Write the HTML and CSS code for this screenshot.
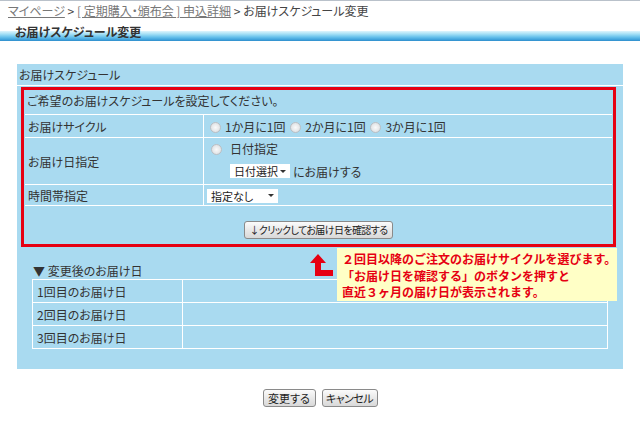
FILE: index.html
```html
<!DOCTYPE html>
<html lang="ja">
<head>
<meta charset="utf-8">
<link rel="stylesheet" href="styles.css">
</head>
<body>
<div class="crumbs"><a href="#">マイページ</a> &gt; <a href="#">[ 定期購入・頒布会 ] 申込詳細</a> &gt; お届けスケジュール変更</div>
<div class="pagehead">お届けスケジュール変更</div>

<div class="panel">
  <div class="panel-title">お届けスケジュール</div>
  <div class="redbox">
    <div class="intro">ご希望のお届けスケジュールを設定してください。</div>
    <table class="form">
      <tr class="r-cycle">
        <th>お届けサイクル</th>
        <td><span class="radio"></span>1か月に1回 <span class="radio"></span>2か月に1回 <span class="radio"></span>3か月に1回</td>
      </tr>
      <tr class="r-date">
        <th>お届け日指定</th>
        <td>
          <div class="line1"><span class="radio"></span>日付指定</div>
          <div class="line2"><span class="sel sel-date">日付選択<i class="caret"></i></span>にお届けする</div>
        </td>
      </tr>
      <tr class="r-time">
        <th>時間帯指定</th>
        <td><span class="sel sel-time">指定なし<i class="caret"></i></span></td>
      </tr>
    </table>
    <div class="checkrow"><button class="btn btn-check">↓クリックしてお届け日を確認する</button></div>
  </div>

  <div class="after-head">▼ 変更後のお届け日</div>
  <table class="dates">
    <tr><th>1回目のお届け日</th><td></td></tr>
    <tr><th>2回目のお届け日</th><td></td></tr>
    <tr><th>3回目のお届け日</th><td></td></tr>
  </table>

  <svg class="arrow" width="24" height="24" viewBox="0 0 24 24"><polygon points="8,0 0,9 5,9 5,22 23,22 23,16 11,16 11,9 16,9" fill="#e60012"/></svg>
  <div class="callout">２回目以降のご注文のお届けサイクルを選びます。<br>「お届け日を確認する」のボタンを押すと<br>直近３ヶ月の届け日が表示されます。</div>
</div>

<div class="actions">
  <button class="btn btn-ok">変更する</button>
  <button class="btn btn-cancel">キャンセル</button>
</div>
</body>
</html>
```

FILE: styles.css
```css
html, body {
  margin: 0;
  padding: 0;
  background: #fff;
}
body {
  border-top: 1px solid #b9c1ca;
  font-family: "Noto Sans CJK JP", "DejaVu Sans", sans-serif;
  font-size: 12px;
  color: #333;
  font-feature-settings: "palt";
}
.crumbs {
  height: 20px;
  line-height: 20px;
  padding-left: 8px;
  color: #444;
}
.crumbs a {
  color: #777;
  text-decoration: underline;
}
.pagehead {
  height: 20px;
  line-height: 22px;
  padding-left: 15px;
  font-weight: bold;
  color: #333;
  background:
    linear-gradient(to bottom, #fff 0, #fff 10px, #dff5fd 10px, #a6e0f6 13px, #69c2ec 16px, #3c9ed9 19px, #2f8cc9 20px);
}
.panel {
  position: relative;
  margin: 23px 0 0 17px;
  width: 606px;
  background: #a9daf0;
  padding-bottom: 20px;
}
.panel-title {
  height: 21px;
  line-height: 21px;
  padding-left: 2px;
  border-bottom: 1px solid #fff;
}
.redbox {
  margin: 1px 7px 0 4px;
  border: 3px solid #e60012;
}
.intro {
  height: 24px;
  line-height: 22px;
  padding-left: 3px;
}
.form {
  width: calc(100% - 2px);
  margin: 0 1px;
  border-collapse: collapse;
  border-top: 1px solid #fff;
}
.form th, .form td {
  border-bottom: 1px solid #fff;
  padding: 0;
  vertical-align: middle;
}
.form th {
  width: 175px;
  text-align: left;
  font-weight: normal;
  padding-left: 3px;
  border-right: 1px solid #fff;
}
.form td {
  padding-left: 6px;
}
.r-cycle th, .r-cycle td { height: 22px; }
.r-date th, .r-date td { height: 46px; }
.r-time th, .r-time td { height: 20px; }
.r-time td { padding-left: 3px; }
.line1 {
  height: 20px;
  line-height: 20px;
  padding-left: 1px;
}
.line1 .radio { margin-right: 8px; }
.line2 {
  height: 24px;
  display: flex;
  align-items: center;
  padding-left: 20px;
}
.radio {
  display: inline-block;
  width: 9px;
  height: 9px;
  border-radius: 50%;
  border: 1px solid #b9bec3;
  background: radial-gradient(circle at 50% 50%, #fafafa 0, #e2e4e6 70%);
  vertical-align: -1px;
  margin: 0 4px 0 0;
}
.r-cycle .radio { margin-left: 2px; }
.r-cycle .radio:first-child { margin-left: 0; }
.sel {
  display: inline-flex;
  align-items: center;
  justify-content: space-between;
  height: 14px;
  background: #fff;
  padding: 0 4px;
  box-sizing: border-box;
  font-size: 11px;
  line-height: 14px;
  color: #222;
}
.sel-date { width: 60px; margin-right: 3px; }
.sel-time { width: 71px; }
.caret {
  display: inline-block;
  width: 0;
  height: 0;
  border-left: 3px solid transparent;
  border-right: 3px solid transparent;
  border-top: 3px solid #333;
}
.checkrow {
  height: 38px;
  display: flex;
  justify-content: center;
  align-items: flex-start;
  padding-top: 15px;
  box-sizing: border-box;
}
.btn {
  font-family: inherit;
  font-size: 11px;
  color: #222;
  height: 18px;
  padding: 0 5px;
  line-height: 16px;
  border: 1px solid #8a8a8a;
  border-radius: 3px;
  background: linear-gradient(#fbfbfb, #e9e9e9 50%, #d9d9d9);
  font-feature-settings: "palt";
}
.btn-check {
  width: 149px;
  padding: 0;
  font-size: 10px;
  letter-spacing: -0.6px;
}
.after-head {
  margin: 15px 0 0 15px;
  height: 17px;
  line-height: 17px;
  padding-left: 1px;
}
.dates {
  margin-left: 15px;
  width: 576px;
  border-collapse: collapse;
}
.dates th, .dates td {
  border: 1px solid #fff;
  height: 22px;
  padding: 0;
}
.dates th {
  width: 145px;
  text-align: left;
  font-weight: normal;
  padding-left: 4px;
}
.arrow {
  position: absolute;
  left: 293px;
  top: 190px;
}
.callout {
  position: absolute;
  left: 320px;
  top: 184px;
  width: 280px;
  height: 53px;
  box-sizing: border-box;
  padding: 3px 0 0 5px;
  background: #ffffc6;
  color: #e60012;
  font-weight: bold;
  font-size: 12px;
  line-height: 16.5px;
  font-feature-settings: normal;
}
.actions {
  display: flex;
  justify-content: center;
  gap: 6px;
  margin-top: 20px;
}
.btn-ok { width: 53px; padding: 0; }
.btn-cancel { width: 56px; padding: 0; letter-spacing: -0.5px; }
```
